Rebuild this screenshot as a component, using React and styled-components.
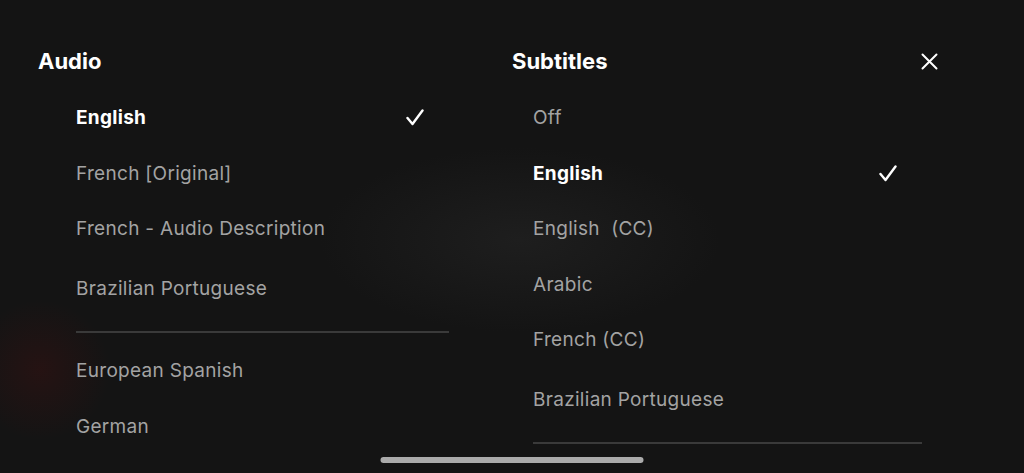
import React from "react";
import styled, { createGlobalStyle } from "styled-components";

const GlobalStyle = createGlobalStyle`
  html, body {
    margin: 0;
    padding: 0;
    background: #141414;
  }
  * {
    box-sizing: border-box;
  }
`;

const Screen = styled.div`
  position: relative;
  width: 1024px;
  height: 473px;
  overflow: hidden;
  background:
    radial-gradient(circle at 40px 370px, rgba(70, 16, 16, 0.35), transparent 70px),
    radial-gradient(ellipse at 520px 240px, rgba(40, 40, 40, 0.5), transparent 200px),
    #141414;
  font-family: Inter, "Noto Sans", "Liberation Sans", sans-serif;
  color: #fff;
  display: grid;
  grid-template-columns: 474px 426px;
  padding: 47px 0 0 38px;
`;

const Column = styled.section`
  display: flex;
  flex-direction: column;
`;

const Header = styled.div`
  height: 28px;
  display: flex;
  align-items: center;
  justify-content: space-between;
  margin-bottom: 15px;
`;

const Title = styled.h2`
  margin: 0;
  font-size: 22px;
  font-weight: 700;
  color: #fff;
`;

const CloseButton = styled.button`
  border: none;
  background: none;
  padding: 0;
  width: 17px;
  height: 17px;
  display: flex;
  color: #fff;
`;

const List = styled.ul`
  list-style: none;
  margin: 0 0 0 ${(p) => p.$indent}px;
  padding: 0;
  width: ${(p) => p.$width}px;
`;

const Item = styled.li`
  height: 55.5px;
  margin-top: ${(p) => (p.$spaced ? "4.5px" : "0")};
  display: flex;
  align-items: center;
  justify-content: space-between;
  padding-right: 25px;
  font-size: 19px;
  letter-spacing: 0.3px;
  white-space: pre;
  font-weight: ${(p) => (p.$selected ? 700 : 400)};
  color: ${(p) => (p.$selected ? "#ffffff" : "#a3a3a3")};
`;

const Divider = styled.li`
  height: 2px;
  background: #3a3a3a;
  margin: 14.5px 0 10px;
`;

const HomeIndicator = styled.div`
  position: absolute;
  left: 50%;
  bottom: 10px;
  transform: translateX(-50%);
  width: 263px;
  height: 6px;
  border-radius: 3px;
  background: #ababab;
`;

const Check = () => (
  <svg width="18" height="17" viewBox="0 0 18 17" fill="none">
    <path
      d="M1.5 9 L6.5 15 L16.5 1.5"
      stroke="#fff"
      strokeWidth="2.4"
      strokeLinecap="round"
      strokeLinejoin="round"
    />
  </svg>
);

const CloseIcon = () => (
  <svg width="17" height="17" viewBox="0 0 17 17" fill="none">
    <path
      d="M1.5 1.5 L15.5 15.5 M15.5 1.5 L1.5 15.5"
      stroke="#fff"
      strokeWidth="2"
      strokeLinecap="round"
    />
  </svg>
);

const audio = [
  { label: "English", selected: true },
  { label: "French [Original]" },
  { label: "French - Audio Description" },
  { label: "Brazilian Portuguese", spaced: true },
  { divider: true },
  { label: "European Spanish" },
  { label: "German" },
];

const subtitles = [
  { label: "Off" },
  { label: "English", selected: true },
  { label: "English  (CC)" },
  { label: "Arabic" },
  { label: "French (CC)" },
  { label: "Brazilian Portuguese", spaced: true },
  { divider: true },
];

const Options = ({ items, indent, width }) => (
  <List $indent={indent} $width={width}>
    {items.map((it, i) =>
      it.divider ? (
        <Divider key={i} />
      ) : (
        <Item key={i} $selected={it.selected} $spaced={it.spaced}>
          <span>{it.label}</span>
          {it.selected && <Check />}
        </Item>
      )
    )}
  </List>
);

export default function App() {
  return (
    <>
      <GlobalStyle />
      <Screen>
        <Column>
          <Header>
            <Title>Audio</Title>
          </Header>
          <Options items={audio} indent={38} width={373} />
        </Column>
        <Column>
          <Header>
            <Title>Subtitles</Title>
            <CloseButton aria-label="Close">
              <CloseIcon />
            </CloseButton>
          </Header>
          <Options items={subtitles} indent={21} width={389} />
        </Column>
        <HomeIndicator />
      </Screen>
    </>
  );
}
